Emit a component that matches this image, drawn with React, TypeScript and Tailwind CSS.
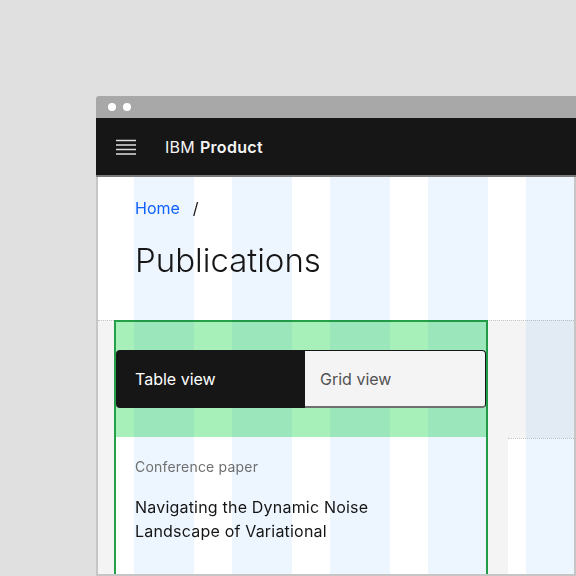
import { ReactNode } from 'react'

const font = { fontFamily: 'Inter, "Noto Sans", sans-serif' }

function MenuIcon() {
  return (
    <svg width="20" height="18" viewBox="0 0 20 18" fill="none">
      <path d="M0 2.5h20M0 7h20M0 11.5h20M0 16h20" stroke="#e0e0e0" strokeWidth="1.6" />
    </svg>
  )
}

/* grid overlay columns, painted above section backgrounds, below controls */
function GridColumns() {
  return (
    <div className="pointer-events-none absolute inset-0 flex gap-[38px] overflow-hidden pl-[36px]">
      {[0, 1, 2, 3, 4].map((i) => (
        <div key={i} className="h-full w-[60px] shrink-0 bg-[#edf5ff] mix-blend-multiply" />
      ))}
    </div>
  )
}

function Layer({ children }: { children: ReactNode }) {
  return <div className="relative z-10">{children}</div>
}

export default function App() {
  return (
    <div
      className="h-[576px] w-[576px] overflow-hidden bg-[#e0e0e0] pl-[96px] pt-[96px]"
      style={font}
    >
      <div className="flex h-[480px] w-[480px] flex-col overflow-hidden">
        {/* Browser chrome */}
        <div className="flex h-[22px] shrink-0 items-center gap-[7px] rounded-tl-[3px] bg-[#a8a8a8] pl-[12px]">
          <span className="h-[8px] w-[8px] rounded-full bg-white" />
          <span className="h-[8px] w-[8px] rounded-full bg-white" />
        </div>

        {/* Header */}
        <div className="flex h-[59px] shrink-0 items-center border-b-2 border-[#7a7a7a] bg-[#161616] pl-[20px]">
          <MenuIcon />
          <div className="ml-[29px] text-[16px] tracking-[0.3px] text-[#f4f4f4]">
            IBM <span className="font-semibold">Product</span>
          </div>
        </div>

        {/* Page */}
        <div className="relative isolate flex min-h-0 flex-1 flex-col border-x-2 border-b-2 border-[#c6c6c6] bg-white">
          <GridColumns />

          <div className="h-[143px] shrink-0 pl-[37px] pt-[20px]">
            <Layer>
              <div className="flex items-center gap-[13px] text-[16px] leading-[22px]">
                <span className="text-[#0f62fe]">Home</span>
                <span className="text-[#161616]">/</span>
              </div>
              <h1 className="mt-[21px] text-[33px] font-light leading-[40px] text-[#161616]">
                Publications
              </h1>
            </Layer>
          </div>

          <div className="flex flex-1 border-t border-dotted border-[#c6c6c6] bg-[#f4f4f4] pl-[16px]">
            {/* Selected card */}
            <div className="-mt-px flex w-[374px] shrink-0 flex-col border-2 border-b-0 border-[#24a148]">
              <div className="bg-[#a7f0ba] pb-[29px] pt-[28px]">
                <Layer>
                  <div className="flex h-[58px] text-[16px]">
                    <div className="flex w-[189px] items-center rounded-l-[4px] bg-[#161616] pl-[19px] text-white">
                      Table view
                    </div>
                    <div className="flex flex-1 items-center rounded-r-[4px] border border-l-0 border-[#161616] border-b-2 border-b-[#6f6f6f] bg-[#f4f4f4] pl-[15px] text-[#525252]">
                      Grid view
                    </div>
                  </div>
                </Layer>
              </div>
              <div className="flex-1 bg-white pl-[19px] pt-[21px]">
                <Layer>
                  <div className="text-[14px] leading-[18px] tracking-[0.2px] text-[#6f6f6f]">
                    Conference paper
                  </div>
                  <div className="mt-[19px] text-[16px] leading-[24px] tracking-[0.2px] text-[#161616]">
                    Navigating the Dynamic Noise
                    <br />
                    Landscape of Variational
                  </div>
                </Layer>
              </div>
            </div>

            {/* Neighbour column */}
            <div className="flex flex-1 flex-col">
              <div className="h-[117px] shrink-0" />
              <div className="ml-[20px] flex-1 border-t border-dotted border-[#c6c6c6] bg-white" />
            </div>
          </div>
        </div>
      </div>
    </div>
  )
}
